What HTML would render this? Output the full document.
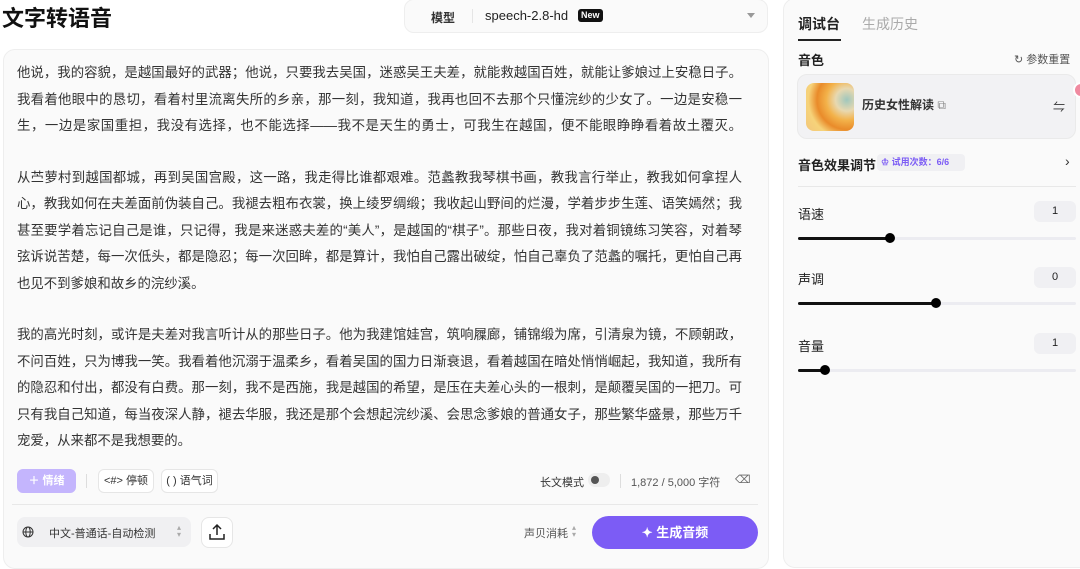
<!DOCTYPE html>
<html><head><meta charset="utf-8"><style>
*{box-sizing:border-box;margin:0;padding:0}
body{width:1080px;height:556px;overflow:hidden;background:#fff;font-family:"Liberation Sans","Noto Sans CJK SC",sans-serif;color:#222;position:relative}
.abs{position:absolute}
.title{left:2px;top:1px;font-size:22px;font-weight:bold;color:#111}
.model{left:404px;top:-1px;width:364px;height:34px;border:1px solid #eee;border-radius:10px;background:#fafafa}
.card{left:3px;top:49px;width:766px;height:520px;border:1px solid #eee;border-radius:12px;background:#fafafa}
.ln{position:absolute;left:17px;width:725px;font-size:13.4px;color:#333;white-space:nowrap;text-align:justify;text-align-last:justify;line-height:16px}
.ln.l{text-align:left;text-align-last:left}
.btn{position:absolute;height:24px;border:1px solid #e6e6e6;border-radius:6px;background:#fff;font-size:11px;color:#333;line-height:22px;text-align:center}
.right{left:783px;top:-2px;width:310px;height:570px;border:1px solid #eee;border-radius:12px;background:#fafafa}
.lab{position:absolute;font-size:13px;color:#222;font-weight:bold}
.val{position:absolute;left:1034px;width:42px;height:21px;background:#f0f0f3;border-radius:6px;font-size:11px;text-align:center;line-height:21px}
.track{position:absolute;left:798px;width:278px;height:3px;background:#ececf1;border-radius:2px}
.fill{position:absolute;left:0;top:0;height:3px;background:#111;border-radius:2px}
.knob{position:absolute;top:-4px;width:10px;height:10px;background:#000;border-radius:50%}
</style></head><body>
<div class="abs title">文字转语音</div>
<div class="abs model">
 <span class="abs" style="left:26px;top:9px;font-size:12px;font-weight:bold;color:#333">模型</span>
 <span class="abs" style="left:67px;top:9px;width:1px;height:14px;background:#e5e5e5"></span>
 <span class="abs" style="left:80px;top:8px;font-size:13px;color:#222">speech-2.8-hd</span>
 <span class="abs" style="left:173px;top:9px;background:#111;color:#fff;font-size:9px;font-weight:bold;border-radius:3px;padding:1px 3px;line-height:11px">New</span>
 <span class="abs" style="left:342px;top:13px;width:0;height:0;border-left:4px solid transparent;border-right:4px solid transparent;border-top:5px solid #999"></span>
</div>
<div class="abs card"></div>
<div class="ln" style="top:65px">他说，我的容貌，是越国最好的武器；他说，只要我去吴国，迷惑吴王夫差，就能救越国百姓，就能让爹娘过上安稳日子。</div>
<div class="ln" style="top:92px">我看着他眼中的恳切，看着村里流离失所的乡亲，那一刻，我知道，我再也回不去那个只懂浣纱的少女了。一边是安稳一</div>
<div class="ln" style="top:118px">生，一边是家国重担，我没有选择，也不能选择——我不是天生的勇士，可我生在越国，便不能眼睁睁看着故土覆灭。</div>
<div class="ln" style="top:170px">从苎萝村到越国都城，再到吴国宫殿，这一路，我走得比谁都艰难。范蠡教我琴棋书画，教我言行举止，教我如何拿捏人</div>
<div class="ln" style="top:196px">心，教我如何在夫差面前伪装自己。我褪去粗布衣裳，换上绫罗绸缎；我收起山野间的烂漫，学着步步生莲、语笑嫣然；我</div>
<div class="ln" style="top:223px">甚至要学着忘记自己是谁，只记得，我是来迷惑夫差的“美人”，是越国的“棋子”。那些日夜，我对着铜镜练习笑容，对着琴</div>
<div class="ln" style="top:249px">弦诉说苦楚，每一次低头，都是隐忍；每一次回眸，都是算计，我怕自己露出破绽，怕自己辜负了范蠡的嘱托，更怕自己再</div>
<div class="ln l" style="top:276px">也见不到爹娘和故乡的浣纱溪。</div>
<div class="ln" style="top:327px">我的高光时刻，或许是夫差对我言听计从的那些日子。他为我建馆娃宫，筑响屧廊，铺锦缎为席，引清泉为镜，不顾朝政，</div>
<div class="ln" style="top:354px">不问百姓，只为博我一笑。我看着他沉溺于温柔乡，看着吴国的国力日渐衰退，看着越国在暗处悄悄崛起，我知道，我所有</div>
<div class="ln" style="top:380px">的隐忍和付出，都没有白费。那一刻，我不是西施，我是越国的希望，是压在夫差心头的一根刺，是颠覆吴国的一把刀。可</div>
<div class="ln" style="top:407px">只有我自己知道，每当夜深人静，褪去华服，我还是那个会想起浣纱溪、会思念爹娘的普通女子，那些繁华盛景，那些万千</div>
<div class="ln l" style="top:433px">宠爱，从来都不是我想要的。</div>

<div class="btn" style="left:17px;top:469px;width:59px;background:#c4b5fd;border-color:#c4b5fd;color:#fff;font-weight:bold">＋ 情绪</div>
<div class="abs" style="left:86px;top:474px;width:1px;height:14px;background:#ddd"></div>
<div class="btn" style="left:98px;top:469px;width:56px">&lt;#&gt; 停顿</div>
<div class="btn" style="left:161px;top:469px;width:57px">( ) 语气词</div>
<div class="abs" style="left:540px;top:474px;font-size:11px;color:#333">长文模式</div>
<div class="abs" style="left:588px;top:473px;width:22px;height:14px;border-radius:7px;background:#eee"><div class="abs" style="left:3px;top:3px;width:8px;height:8px;border-radius:50%;background:#555"></div></div>
<div class="abs" style="left:620px;top:474px;width:1px;height:14px;background:#ddd"></div>
<div class="abs" style="left:631px;top:474px;font-size:11px;color:#555">1,872 / 5,000 字符</div>
<div class="abs" style="left:735px;top:473px;font-size:11px;color:#666">⌫</div>
<div class="abs" style="left:12px;top:504px;width:494px;height:1px;background:#e8e8e8;width:746px"></div>

<div class="abs" style="left:17px;top:517px;width:174px;height:30px;background:#f0f0f2;border-radius:8px"></div>
<svg class="abs" style="left:22px;top:526px" width="12" height="12" viewBox="0 0 12 12" fill="none" stroke="#333" stroke-width="1"><circle cx="6" cy="6" r="5"/><ellipse cx="6" cy="6" rx="2.2" ry="5"/><path d="M1 6h10"/></svg>
<div class="abs" style="left:49px;top:525px;font-size:11px;color:#333">中文-普通话-自动检测</div>
<div class="abs" style="left:177px;top:524px;font-size:8px;color:#aaa;line-height:7px">▴<br>▾</div>
<div class="abs" style="left:201px;top:517px;width:32px;height:31px;border:1px solid #e6e6e6;border-radius:8px;background:#fff"></div>
<svg class="abs" style="left:208px;top:523px" width="18" height="18" viewBox="0 0 18 18" fill="none" stroke="#222" stroke-width="1.5"><path d="M9 12V2M5 6l4-4 4 4M2 11v5h14v-5"/></svg>
<div class="abs" style="left:524px;top:525px;font-size:11px;color:#555">声贝消耗</div>
<div class="abs" style="left:572px;top:524px;font-size:8px;color:#aaa;line-height:7px">▴<br>▾</div>
<div class="abs" style="left:592px;top:516px;width:166px;height:33px;border-radius:17px;background:#7c5cf5;color:#fff;font-size:13px;font-weight:bold;text-align:center;line-height:33px">✦ 生成音频</div>

<div class="abs right"></div>
<div class="abs" style="left:798px;top:14px;font-size:14px;font-weight:bold;color:#222">调试台</div>
<div class="abs" style="left:798px;top:39px;width:43px;height:2px;background:#222"></div>
<div class="abs" style="left:862px;top:14px;font-size:14px;color:#aaa">生成历史</div>
<div class="lab" style="left:798px;top:50px">音色</div>
<div class="abs" style="left:1014px;top:51px;font-size:11px;color:#555">↻ 参数重置</div>
<div class="abs" style="left:797px;top:74px;width:279px;height:65px;background:#f2f2f4;border:1px solid #eaeaea;border-radius:10px"></div>
<div class="abs" style="left:806px;top:83px;width:48px;height:48px;border-radius:8px;background:radial-gradient(circle at 85% 35%,#9fc7bd 0,#e8d8b0 22%,#f3b24a 40%,#e98b2a 58%,#f6d37a 75%,#f3c67a 100%)"></div>
<div class="abs" style="left:862px;top:96px;font-size:12px;font-weight:bold;color:#333">历史女性解读 <span style="font-weight:normal;color:#888">⧉</span></div>
<div class="abs" style="left:1053px;top:98px;font-size:12px;color:#333">⇋</div>
<div class="lab" style="left:798px;top:155px">音色效果调节</div>
<div class="abs" style="left:877px;top:154px;width:88px;height:17px;background:#f0f0f3;border-radius:4px;font-size:9px;color:#7c5cf5;font-weight:bold;line-height:17px;padding-left:4px">♔ 试用次数：6/6</div>
<div class="abs" style="left:1065px;top:153px;font-size:14px;color:#333">›</div>
<div class="abs" style="left:798px;top:186px;width:278px;height:1px;background:#e8e8e8"></div>

<div class="lab" style="left:798px;top:204px;font-weight:normal">语速</div>
<div class="val" style="top:201px">1</div>
<div class="track" style="top:237px"><div class="fill" style="width:92px"></div><div class="knob" style="left:87px"></div></div>
<div class="lab" style="left:798px;top:269px;font-weight:normal">声调</div>
<div class="val" style="top:267px">0</div>
<div class="track" style="top:302px"><div class="fill" style="width:138px"></div><div class="knob" style="left:133px"></div></div>
<div class="lab" style="left:798px;top:336px;font-weight:normal">音量</div>
<div class="val" style="top:333px">1</div>
<div class="track" style="top:369px"><div class="fill" style="width:27px"></div><div class="knob" style="left:22px"></div></div>
<div class="abs" style="left:1073px;top:82px;width:16px;height:16px;border-radius:50%;background:#f08aa0;border:2px solid #fff"></div>
</body></html>
